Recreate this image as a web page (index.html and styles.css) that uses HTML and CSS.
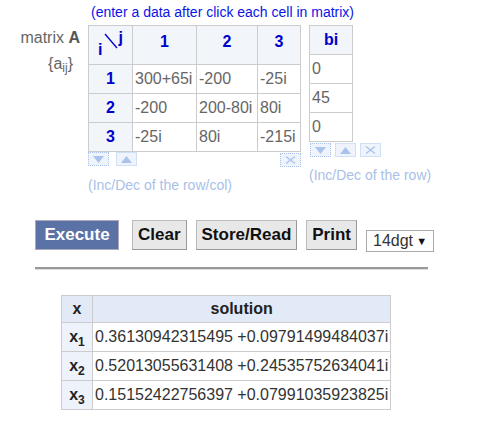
FILE: index.html
```html
<!DOCTYPE html>
<html lang="en">
<head>
    <meta charset="UTF-8">
    <title>Complex Linear Equations</title>
    <link rel="stylesheet" href="styles.css">
</head>
<body>

    <div class="hint">(enter a data after click each cell in matrix)</div>

    <div class="matrix-area">
        <div class="mat-label">
            <div>matrix <b>A</b></div>
            <div class="aij">{a<sub>ij</sub>}</div>
        </div>

        <div class="mat-block">
            <table class="mat">
                <colgroup>
                    <col style="width:44px"><col style="width:64px"><col style="width:61px"><col style="width:43px">
                </colgroup>
                <tr class="head">
                    <th class="ij">
                        <span class="ij-i">i</span><svg class="ij-line" width="14" height="18" viewBox="0 0 14 18"><line x1="1" y1="2" x2="13" y2="16" stroke="#0000cc" stroke-width="1.3"/></svg><span class="ij-j">j</span>
                    </th>
                    <th>1</th><th>2</th><th>3</th>
                </tr>
                <tr><th>1</th><td>300+65i</td><td>-200</td><td>-25i</td></tr>
                <tr><th>2</th><td>-200</td><td>200-80i</td><td>80i</td></tr>
                <tr><th>3</th><td>-25i</td><td>80i</td><td>-215i</td></tr>
            </table>
            <div class="ctrl">
                <div class="ctrl-left">
                    <span class="ibtn dotted"><svg width="17" height="10" viewBox="0 0 17 10"><polygon points="3,2 14,2 8.5,9" fill="#a9c3ec"/></svg></span>
                    <span class="ibtn"><svg width="17" height="10" viewBox="0 0 17 10"><polygon points="3,9 14,9 8.5,2" fill="#a9c3ec"/></svg></span>
                </div>
                <span class="ibtn dotted low"><svg width="17" height="10" viewBox="0 0 17 10"><path d="M4 1.5 L13 8.5 M13 1.5 L4 8.5" stroke="#a9c3ec" stroke-width="1.4"/></svg></span>
            </div>
            <div class="note">(Inc/Dec of the row/col)</div>
        </div>

        <div class="vec-block">
            <table class="mat vec">
                <tr class="head short"><th>bi</th></tr>
                <tr><td>0</td></tr>
                <tr><td>45</td></tr>
                <tr><td>0</td></tr>
            </table>
            <div class="ctrl ctrl-vec">
                <span class="ibtn dotted"><svg width="17" height="10" viewBox="0 0 17 10"><polygon points="3,2 14,2 8.5,9" fill="#a9c3ec"/></svg></span>
                <span class="ibtn"><svg width="17" height="10" viewBox="0 0 17 10"><polygon points="3,9 14,9 8.5,2" fill="#a9c3ec"/></svg></span>
                <span class="ibtn"><svg width="17" height="10" viewBox="0 0 17 10"><path d="M4 1.5 L13 8.5 M13 1.5 L4 8.5" stroke="#a9c3ec" stroke-width="1.4"/></svg></span>
            </div>
            <div class="note note-vec">(Inc/Dec of the row)</div>
        </div>
    </div>

    <div class="actions">
        <button class="btn primary">Execute</button>
        <button class="btn">Clear</button>
        <button class="btn">Store/Read</button>
        <button class="btn">Print</button>
        <span class="digits">14dgt <span class="arrow">&#9660;</span></span>
    </div>

    <hr class="sep">

    <table class="sol">
        <tr class="sol-head"><th class="xcol">x</th><th>solution</th></tr>
        <tr><th class="xcol">x<sub>1</sub></th><td>0.36130942315495 +0.09791499484037i</td></tr>
        <tr><th class="xcol">x<sub>2</sub></th><td>0.52013055631408 +0.24535752634041i</td></tr>
        <tr><th class="xcol">x<sub>3</sub></th><td>0.15152422756397 +0.07991035923825i</td></tr>
    </table>

</body>
</html>
```

FILE: styles.css
```css
body {
    font-family: 'Liberation Sans', Arial, sans-serif;
    background-color: #fff;
    color: #333;
    margin: 0;
    padding: 0;
}

.hint {
    margin: 3px 0 0 91px;
    font-size: 14px;
    line-height: 18px;
    color: #0a14e6;
}

.matrix-area {
    display: flex;
    align-items: flex-start;
    margin-top: 4px;
}

.mat-label {
    width: 88px;
    box-sizing: border-box;
    padding: 3px 8px 0 0;
    text-align: right;
    font-size: 16px;
    line-height: 20px;
    color: #666;
}

    .mat-label b {
        color: #555;
    }

    .mat-label .aij {
        margin-top: 6px;
        padding-right: 7px;
    }

    .mat-label sub {
        font-size: 12px;
        vertical-align: -3px;
        line-height: 0;
    }

.mat {
    border-collapse: collapse;
    table-layout: fixed;
    width: 212px;
    font-size: 16px;
    border: 1px solid #ccc;
}

    .mat th,
    .mat td {
        border: 1px solid #ccc;
        height: 29px;
        padding: 0 0 0 2px;
        box-sizing: border-box;
    }

    .mat th {
        background-color: #f2f5fa;
        color: #0000cc;
        font-weight: bold;
        text-align: center;
        padding: 0;
    }

    .mat td {
        color: #666;
        white-space: nowrap;
        overflow: hidden;
    }

    .mat .head th {
        height: 39px;
        padding-bottom: 6px;
    }

    .mat .head.short th {
        height: 29px;
        padding-bottom: 0;
    }

.ij {
    font-size: 16px;
}

.ij-i {
    position: relative;
    top: 7px;
}

.ij-line {
    vertical-align: -2px;
    margin: 0 1px;
}

.ij-j {
    position: relative;
    top: -5px;
}

.ctrl {
    display: flex;
    justify-content: space-between;
    align-items: flex-start;
    height: 14px;
}

.ctrl-left {
    display: flex;
    gap: 7px;
}

.ibtn {
    display: inline-flex;
    align-items: center;
    justify-content: center;
    width: 19px;
    height: 12px;
    border: 1px solid #d2e0f5;
    background-color: #eef3fc;
}

    .ibtn.dotted {
        border: 1px dotted #a9c3ec;
    }

    .ibtn.low {
        margin-top: 1px;
    }

.note {
    margin-top: 10px;
    font-size: 14px;
    line-height: 18px;
    color: #a9c0e8;
}

.vec-block {
    margin-left: 8px;
}

.vec {
    width: 44px;
}

.ctrl-vec {
    justify-content: flex-start;
    gap: 4px;
    padding-left: 1px;
    margin-top: 1px;
}

.note-vec {
    margin-top: 9px;
}

.actions {
    display: flex;
    align-items: flex-end;
    margin: 26px 0 0 35px;
}

.btn {
    font-family: 'Liberation Sans', Arial, sans-serif;
    font-size: 17px;
    font-weight: bold;
    height: 30px;
    padding: 0 5px;
    margin-right: 9px;
    border: 1px solid #bbb;
    border-right-color: #999;
    border-bottom-color: #999;
    background-color: #e8e8e8;
    color: #111;
    cursor: pointer;
}

    .btn.primary {
        background-color: #5b72a6;
        color: #fff;
        width: 84px;
        margin-right: 13px;
        border-color: #aab;
    }

.digits {
    display: inline-flex;
    align-items: center;
    justify-content: space-between;
    width: 68px;
    height: 22px;
    box-sizing: border-box;
    padding: 0 6px 0 6px;
    margin-bottom: -2px;
    border: 1px solid #aaa;
    font-size: 16px;
    color: #333;
}

    .digits .arrow {
        font-size: 11px;
        color: #111;
    }

.sep {
    width: 393px;
    margin: 17px 0 0 35px;
    border: 0;
    border-top: 2px solid #999;
    border-bottom: 1px solid #ddd;
    height: 0;
}

.sol {
    margin: 25px 0 0 61px;
    border-collapse: collapse;
    font-size: 16px;
    border: 1px solid #ccc;
}

    .sol th,
    .sol td {
        border: 1px solid #ccc;
        height: 28px;
        padding: 0 2px;
    }

    .sol td {
        color: #333;
        white-space: nowrap;
    }

    .sol .sol-head th {
        height: 26px;
        background-color: #e2eaf8;
        color: #222;
    }

    .sol .xcol {
        width: 26px;
        background-color: #eef2fa;
        color: #222;
        text-align: center;
    }

    .sol sub {
        font-size: 12px;
        line-height: 0;
    }
```
